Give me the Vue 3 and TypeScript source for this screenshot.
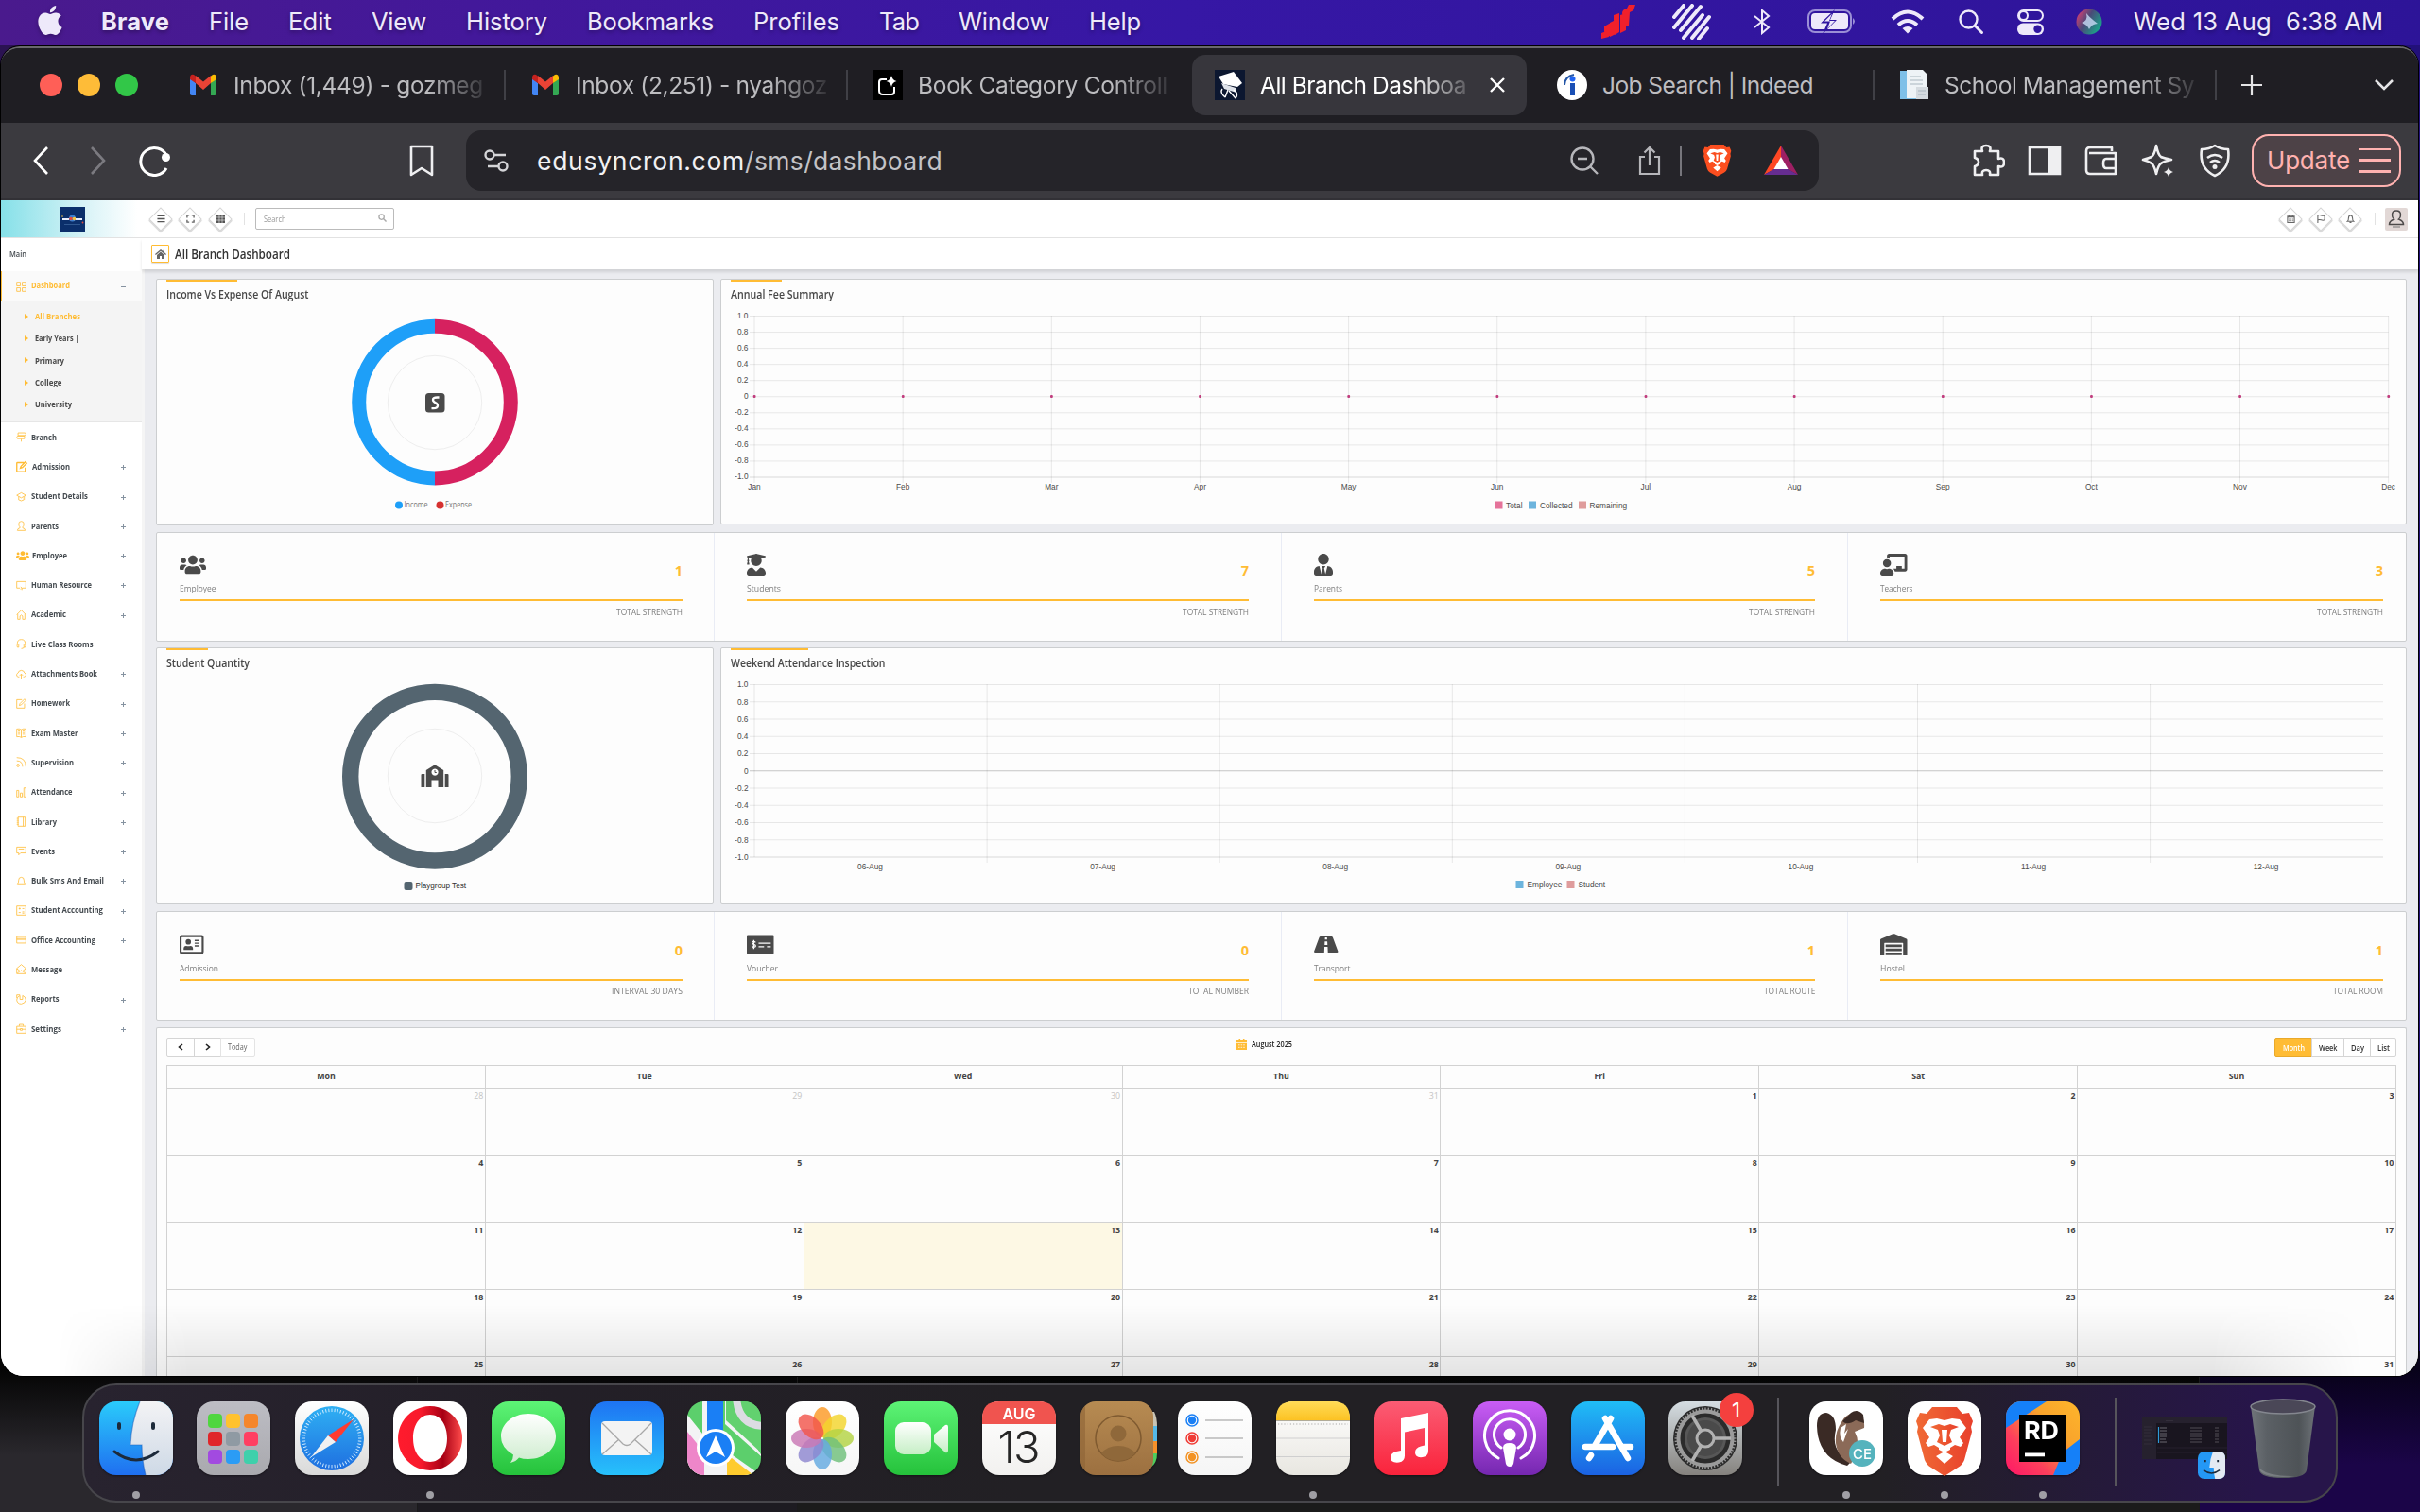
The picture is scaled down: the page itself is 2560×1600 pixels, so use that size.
<script setup lang="ts">
import type { Directive } from 'vue'

// Fits a one-line label to a given width: by letter spacing, or with the
// "squeeze" modifier by narrowing the glyphs themselves.
const vFit: Directive<HTMLElement, number> = {
  mounted(el, binding) {
    const range = document.createRange()
    range.selectNodeContents(el)
    const natural = range.getBoundingClientRect().width
    const count = (el.textContent ?? '').trim().length
    if (!count || !binding.value) return
    if (binding.modifiers.squeeze) {
      el.style.transformOrigin = '0 50%'
      el.style.transform = `scaleX(${binding.value / natural})`
    } else {
      el.style.letterSpacing = `${(binding.value - natural) / count}px`
    }
    el.style.width = `${binding.value}px`
  },
}

interface Label { text: string; w: number }

const menus: Label[] = [
  { text: 'Brave', w: 72 }, { text: 'File', w: 42 }, { text: 'Edit', w: 46 }, { text: 'View', w: 58 },
  { text: 'History', w: 86 }, { text: 'Bookmarks', w: 134 }, { text: 'Profiles', w: 91 },
  { text: 'Tab', w: 42 }, { text: 'Window', w: 96 }, { text: 'Help', w: 55 },
]

const gmail = '<path fill="#4285f4" d="M2 27V9l6 5v13H4q-2 0-2-2z"/><path fill="#34a853" d="M24 27V14l6-5v16q0 2-2 2z"/><path fill="#ea4335" d="M8 14V6l8 6.500 8-6.500v8l-8 7z"/><path fill="#c5221f" d="M2 9q0-5 4-4l2 1.500V14L2 10z"/><path fill="#fbbc04" d="M30 9q0-5-4-4l-2 1.500V14l6-4z"/>'

const tabs = [
  { text: 'Inbox (1,449) - gozmeg', w: 264, active: false, sep: true, icon: gmail },
  { text: 'Inbox (2,251) - nyahgoz', w: 266, active: false, sep: true, icon: gmail },
  { text: 'Book Category Controll', w: 264, active: false, sep: false, icon: '<rect width="32" height="32" fill="#000"/><path fill="none" stroke="#fff" stroke-width="2" d="M15 10H10q-3 0-3 3v9q0 4 4 4h9q3 0 3-3v-5"/><path fill="#fff" d="M20 6q1 5 5.500 6Q21 13 20 18q-1-5-5.500-6Q19 11 20 6z"/>' },
  { text: 'All Branch Dashboa', w: 218, active: true, sep: false, icon: '<rect width="32" height="32" fill="#0c1730"/><path fill="#fff" d="M4 7l16-5 9 12-5 4-15-3z"/><path fill="#dfe3ea" d="M7 14l15 5 1 5-13-4z"/><path stroke="#fff" stroke-width="1.400" fill="none" d="M11 29l3-8M8 20q-3 4 3 9M15 22l7 8M20 21q6 4 2 9"/>' },
  { text: 'Job Search | Indeed', w: 223, active: false, sep: true, icon: '<circle cx="16" cy="16" r="16" fill="#fff"/><circle cx="16.500" cy="9.500" r="3" fill="#2164f3"/><path d="M14 14h5v13h-5z" fill="#1a4fb5"/><path fill="none" stroke="#2557a7" stroke-width="2" d="M8 16q0-9 10-11"/>' },
  { text: 'School Management Sy', w: 264, active: false, sep: true, icon: '<path fill="#7fc0e8" d="M1 1h17v30H1z"/><path fill="#eef3f6" d="M8 0h17l5 5v25H8z"/><path fill="#d5dbe0" d="M18 18h13v13H18z"/><path stroke="#a9b6bf" d="M11 7h12M11 11h14M11 15h14M20 22h8M20 26h8"/>' },
]

const stroke = (d: string) => `<path fill="none" stroke="currentColor" d="${d}"/>`
const USERS = 'M96 224c35.300 0 64-28.700 64-64s-28.700-64-64-64-64 28.700-64 64 28.700 64 64 64zm448 0c35.300 0 64-28.700 64-64s-28.700-64-64-64-64 28.700-64 64 28.700 64 64 64zm32 32h-64c-17.600 0-33.500 7.100-45.100 18.600 40.300 22.100 68.900 62 75.100 109.400h66c17.700 0 32-14.300 32-32v-32c0-35.300-28.700-64-64-64zm-256 0c61.900 0 112-50.100 112-112S381.900 32 320 32 208 82.100 208 144s50.100 112 112 112zm76.800 32h-8.300c-20.800 10-43.900 16-68.500 16s-47.600-6-68.500-16h-8.300C179.600 288 128 339.600 128 403.200V432c0 26.500 21.500 48 48 48h288c26.500 0 48-21.500 48-48v-28.800c0-63.600-51.600-115.200-115.200-115.200zm-223.700-13.400C161.500 263.100 145.600 256 128 256H64c-35.300 0-64 28.700-64 64v32c0 17.700 14.300 32 32 32h65.900c6.300-47.400 34.900-87.300 75.200-109.400z'

interface Nav { text: string; w: number; plus: boolean; icon: string }
const nav: Nav[] = [
  { text: 'Branch', w: 27, plus: false, icon: stroke('M3 1.500h11l1 2-1 2H3zM13 6.500H2l-1 2 1 2h11zM8 11v4') },
  { text: 'Admission', w: 40, plus: true, icon: `<g stroke-width="1.800">${stroke('M11 2H2q-1 0-1 1v11q0 1 1 1h10q1 0 1-1V9M6 10l1-3 6-6 2 2-6 6z')}</g>` },
  { text: 'Student Details', w: 60, plus: true, icon: stroke('M1 6l7-4 7 4-7 4zM4 8v5q4 3 8 0V8M15 6v7') },
  { text: 'Parents', w: 29, plus: true, icon: stroke('M8 1q4 0 4 4 0 3-2 5v1q4 1 4 4H2q0-3 4-4v-1Q4 8 4 5q0-4 4-4z') },
  { text: 'Employee', w: 37, plus: true, icon: `<g transform="scale(.029) translate(0 20)"><path fill="currentColor" stroke="none" d="${USERS}"/></g>` },
  { text: 'Human Resource', w: 64, plus: true, icon: stroke('M6 12H1V2h14v10H9.500M7 10l2 2-2 2M9 12v3') },
  { text: 'Academic', w: 37, plus: true, icon: stroke('M1 8l7-7 7 7M2.500 7v8H6v-5q2-3 4 0v5h3.500V7') },
  { text: 'Live Class Rooms', w: 65.500, plus: false, icon: stroke('M2 9V7q0-6 6-6t6 6v2M2 8h2v5H2q-1-2 0-5zM14 8h-2v5h2q1-2 0-5zM12 13q0 2-4 2') },
  { text: 'Attachments Book', w: 70, plus: true, icon: stroke('M5 12H3q-3-1-2-4 1-2 2-2 1-4 5-4t5 4q3 1 2 4-1 2-3 2h-1M8 15V8M5.500 10L8 7.500 10.500 10') },
  { text: 'Homework', w: 41, plus: true, icon: stroke('M9 2H1v13h12V8M5 11l1-3 7-7 2 2-7 7z') },
  { text: 'Exam Master', w: 49.500, plus: true, icon: stroke('M8 3v12M8 3Q5 1 1 2v12q4-1 7 1 3-2 7-1V2q-4-1-7 1M3 5h3M3 7.500h3M3 10h3M10 5h3M10 7.500h3M10 10h3') },
  { text: 'Supervision', w: 45, plus: true, icon: stroke('M1 1q14 0 14 14M1 6q9 0 9 9M5 13a2 2 0 1 1-4 0 2 2 0 1 1 4 0z') },
  { text: 'Attendance', w: 43.500, plus: true, icon: stroke('M1 5h3v10H1zM6.500 9h3v6h-3zM12 1h3v14h-3z') },
  { text: 'Library', w: 27, plus: true, icon: stroke('M3 1h11v14H3zM11 1v14M1 3h3M1 6h3M1 9h3M1 12h3') },
  { text: 'Events', w: 25, plus: true, icon: stroke('M1 2h14v9H7l-3 3v-3H1zM4 5h8M4 8h6') },
  { text: 'Bulk Sms And Email', w: 77, plus: true, icon: stroke('M2 12q2-1 2-6 0-4 4-4t4 4q0 5 2 6zM6.500 13q1.500 3 3 0') },
  { text: 'Student Accounting', w: 76, plus: true, icon: stroke('M1 1h14v14H1zM4 5h3M5.500 3.500v3M9.500 5h3M4 11h3M9.500 10h3M9.500 12h3') },
  { text: 'Office Accounting', w: 68, plus: true, icon: stroke('M1 3h14v10H1zM1 6h14M1 7.500h14') },
  { text: 'Message', w: 33, plus: false, icon: stroke('M1 7l7-6 7 6v8H1zM1 7l5 4M15 7l-5 4M2 14l6-4 6 4') },
  { text: 'Reports', w: 29.500, plus: true, icon: stroke('M6 2q-5 2-5 7 1 6 7 6 6-1 7-6 0-5-5-7v6H6zM1 6V1h5') },
  { text: 'Settings', w: 32, plus: true, icon: stroke('M1 4.500h14V15H1zM5 4V1.500h6V4M1 9h5M10 9h5M6.500 8h3v2.500h-3z') },
]
const branches: Label[] = [
  { text: 'All Branches', w: 48 }, { text: 'Early Years |', w: 46.500 }, { text: 'Primary', w: 31 },
  { text: 'College', w: 28.500 }, { text: 'University', w: 39 },
]

interface Stat { label: string; w: number; value: number; sub: string; sw: number; box: string; iw: number; icon: string }
const people: Stat[] = [
  { label: 'Employee', w: 38.500, value: 1, sub: 'TOTAL STRENGTH', sw: 70, box: '0 0 640 512', iw: 28, icon: `<path d="${USERS}"/>` },
  { label: 'Students', w: 36, value: 7, sub: 'TOTAL STRENGTH', sw: 70, box: '0 0 448 512', iw: 20, icon: '<path d="M319.400 320.600L224 416l-95.400-95.400C57.100 323.700 0 382.200 0 454.400v9.600c0 26.500 21.500 48 48 48h352c26.500 0 48-21.500 48-48v-9.600c0-72.200-57.100-130.700-128.600-133.800zM13.600 79.800l6.400 1.500v58.400c-7 4.200-12 11.500-12 20.300 0 8.400 4.600 15.400 11.100 19.700L3.500 242c-1.700 6.900 2.100 14 7.600 14h41.800c5.500 0 9.300-7.100 7.600-14l-15.600-62.300C51.400 175.400 56 168.400 56 160c0-8.800-5-16.100-12-20.300V87.100l66 15.900c-8.600 17.200-14 36.400-14 57 0 70.700 57.300 128 128 128s128-57.300 128-128c0-20.600-5.300-39.800-14-57l96.300-23.200c18.200-4.400 18.200-27.100 0-31.500l-190.400-46c-13-3.100-26.700-3.100-39.700 0L13.600 48.200c-18.100 4.400-18.100 27.200 0 31.600z"/>' },
  { label: 'Parents', w: 30, value: 5, sub: 'TOTAL STRENGTH', sw: 70, box: '0 0 448 512', iw: 20, icon: '<path d="M224 256c70.700 0 128-57.300 128-128S294.700 0 224 0 96 57.300 96 128s57.300 128 128 128zm95.800 32.600L272 480l-32-136 32-56h-96l32 56-32 136-47.800-191.400C56.900 292 0 350.300 0 422.400V464c0 26.500 21.500 48 48 48h352c26.500 0 48-21.500 48-48v-41.600c0-72.100-56.900-130.400-128.200-133.800z"/>' },
  { label: 'Teachers', w: 34.500, value: 3, sub: 'TOTAL STRENGTH', sw: 70, box: '0 0 640 512', iw: 28.500, icon: '<path d="M208 352c-2.390 0-4.780.35-7.060 1.090C187.980 357.300 174.350 360 160 360c-14.350 0-27.980-2.700-40.950-6.910-2.280-.74-4.660-1.090-7.050-1.090C49.940 352-.33 402.480 0 464.620.14 490.880 21.730 512 48 512h224c26.270 0 47.860-21.120 48-47.380.33-62.140-49.940-112.620-112-112.620zm-48-32c53.020 0 96-42.980 96-96s-42.980-96-96-96-96 42.980-96 96 42.980 96 96 96zM592 0H208c-26.470 0-48 22.250-48 49.590V96c23.420 0 45.100 6.780 64 17.800V64h352v288h-64v-64H384v64h-76.240c19.100 16.690 33.120 38.730 39.690 64H592c26.470 0 48-22.250 48-49.590V49.590C640 22.250 618.470 0 592 0z"/>' },
]
const facilities: Stat[] = [
  { label: 'Admission', w: 41, value: 0, sub: 'INTERVAL 30 DAYS', sw: 75, box: '0 0 576 512', iw: 25.500, icon: '<path fill-rule="evenodd" d="M50 32h476q50 0 50 50v348q0 50-50 50H50q-50 0-50-50V82q0-50 50-50zm10 48q-12 0-12 12v328q0 12 12 12h456q12 0 12-12V92q0-12-12-12z"/><circle cx="208" cy="192" r="64"/><path d="M96 384v-30q0-62 62-66 50 20 100 0 62 4 62 66v30zM360 144h112v32H360zM360 208h112v32H360zM360 272h112v32H360z"/>' },
  { label: 'Voucher', w: 33, value: 0, sub: 'TOTAL NUMBER', sw: 64, box: '0 0 640 512', iw: 28.500, icon: '<path d="M24 32h592q24 0 24 24v400q0 24-24 24H24q-24 0-24-24V56q0-24 24-24z"/><path fill="none" stroke="#fdfdfd" stroke-width="30" d="M280 224h290M280 310h130M480 310h90M208 208q-20-26-52-22-34 6-30 34 4 22 44 32 42 12 40 40-6 30-46 28-30-2-44-24M166 150v210"/>' },
  { label: 'Transport', w: 38.500, value: 1, sub: 'TOTAL ROUTE', sw: 54.500, box: '0 0 576 512', iw: 25.500, icon: '<path fill-rule="evenodd" d="M154 64h268q20 0 28 22l122 330q10 32-22 32H26q-32 0-22-32L126 86q8-22 28-22zm110 20l-3 56h54l-3-56zm-6 100l-4 82h68l-4-82zm-8 130l-6 134h88l-6-134z"/>' },
  { label: 'Hostel', w: 26, value: 1, sub: 'TOTAL ROOM', sw: 53, box: '0 0 640 512', iw: 28.500, icon: '<path fill-rule="evenodd" d="M0 512V150q0-20 18-28L300 6q20-8 40 0l282 116q18 8 18 28v362h-96V224q0-10-10-10H106q-10 0-10 10v288z"/><path d="M128 256h384v62H128zM128 350h384v62H128zM128 446h384v62H128z"/>' },
]

const months = ['Jan', 'Feb', 'Mar', 'Apr', 'May', 'Jun', 'Jul', 'Aug', 'Sep', 'Oct', 'Nov', 'Dec']
const days = ['06-Aug', '07-Aug', '08-Aug', '09-Aug', '10-Aug', '11-Aug', '12-Aug']
const scale = ['1.0', '0.8', '0.6', '0.4', '0.2', '0', '-0.2', '-0.4', '-0.6', '-0.8', '-1.0']
const weekdays = ['Mon', 'Tue', 'Wed', 'Thu', 'Fri', 'Sat', 'Sun']
const weeks = [
  [28, 29, 30, 31, 1, 2, 3], [4, 5, 6, 7, 8, 9, 10], [11, 12, 13, 14, 15, 16, 17],
  [18, 19, 20, 21, 22, 23, 24], [25, 26, 27, 28, 29, 30, 31],
]

const grad = (id: string, a: string, b: string) =>
  `<linearGradient id="${id}" x2="0" y2="1"><stop stop-color="${a}"/><stop offset="1" stop-color="${b}"/></linearGradient>`
const tile = (id: string, a: string, b: string) => `${grad(id, a, b)}<rect width="78" height="78" rx="18" fill="url(#${id})"/>`
const ring = (n: number, r1: number, r2: number, color: string, w: number) =>
  Array.from({ length: n }, (_, i) => `<path stroke="${color}" stroke-width="${w}" d="M39 ${39 - r1}V${39 - r2}" transform="rotate(${(i * 360) / n} 39 39)"/>`).join('')

const launchColors = ['#4fd63f', '#ffc22e', '#f5862b', '#e0262a', '#8f9aa3', '#ff3f62', '#a24ae0', '#2b9cf5', '#3fd0ab']
const petals = ['#fb9a26', '#f3d42c', '#b3d343', '#6fc07a', '#64a9e0', '#8d86cf', '#c977b4', '#f2554c']

const FINDER = `${grad('fnd', '#2acbfb', '#1f6ff0')}${grad('fnr', '#f3f3f5', '#ced9e6')}<clipPath id="fc"><rect width="78" height="78" rx="18"/></clipPath><g clip-path="url(#fc)"><rect width="78" height="78" fill="url(#fnd)"/><path fill="url(#fnr)" d="M43 0Q34 22 33 46h12q0 16 4 32h30V0z"/></g><path stroke="#1d2a3a" stroke-width="4" stroke-linecap="round" d="M21 24v4M57 24v4"/><path fill="none" stroke="#1d2a3a" stroke-width="3" stroke-linecap="round" d="M16 53q23 18 46 0"/><path fill="none" stroke="#1b5bb8" stroke-width="1.200" d="M43 0Q34 22 33 46h12q0 16 4 32" opacity=".5"/>`
const LION = '<path fill="url(#lio)" d="M26 6h26l6 7 7-1 4 9-2 6 1 5-8 30q-2 5-7 8l-14 9-14-9q-5-3-7-8l-8-30 1-5-2-6 4-9 7 1z"/><path fill="#fff" d="M39 20l8-2 8 1 7 9-7 10 4 6-3 4-6-2-5 3v2l-6 3-6-3v-2l-5-3-6 2-3-4 4-6-7-10 7-9 8-1z"/><path fill="url(#lio)" d="M39 26l-6-2-9 3 8 3 2 6-3 7 8 4 8-4-3-7 2-6 8-3-9-3z"/><path fill="#fff" d="M36 30h6l-1 13h-4zM30 58l9-5 9 5-9 8z"/>'

interface DockApp { icon: string; dot: boolean; badge?: string }
const dockApps: DockApp[] = [
  { dot: true, icon: FINDER },
  { dot: false, icon: tile('lp', '#bdbdc4', '#a9a9ae') + launchColors.map((c, i) => `<rect x="${12 + (i % 3) * 19}" y="${13 + Math.floor(i / 3) * 19}" width="15" height="15" rx="4" fill="${c}"/>`).join('') },
  { dot: false, icon: `${tile('sf', '#ffffff', '#d9d9d9')}${grad('sf2', '#2fb0f3', '#1f6fe0')}<circle cx="39" cy="39" r="34" fill="url(#sf2)"/>${ring(60, 31.500, 28, '#d9efff', 0.9)}<path fill="#ff3b30" d="M62 19L43 43l-8-7z"/><path fill="#f1f1f1" d="M17 59l18-23 8 7z"/>` },
  { dot: true, icon: `${tile('op', '#ffffff', '#ffffff')}<linearGradient id="opg" x2="1"><stop stop-color="#ff1b2d"/><stop offset=".35" stop-color="#f81a2c"/><stop offset=".7" stop-color="#a70014"/><stop offset="1" stop-color="#ff4b4b"/></linearGradient><path fill="url(#opg)" fill-rule="evenodd" d="M39 5a34 34 0 1 0 .1 0zM39 14c11 0 18 11 18 25s-7 25-18 25-18-11-18-25 7-25 18-25z"/>` },
  { dot: false, icon: `${tile('ms', '#5df376', '#25c23b')}${grad('ms2', '#ffffff', '#cdeccd')}<path fill="url(#ms2)" d="M39 13c17 0 29 11 29 24S56 61 39 61q-6 0-10-1.500-3 4-9 5.500 3-4 3-8.500Q10 49 10 37c0-13 12-24 29-24z"/>` },
  { dot: false, icon: `${tile('ml', '#1e74f3', '#27c1fb')}<rect x="12" y="21" width="54" height="36" rx="4" fill="#f3f3f3"/><path fill="none" stroke="#a8a8a8" stroke-width="1.300" d="M13 23l22 22q4 3 8 0l22-22M13 56l18-16M65 56L47 40"/>` },
  { dot: false, icon: `<clipPath id="mp"><rect width="78" height="78" rx="18"/></clipPath><g clip-path="url(#mp)"><rect width="78" height="78" fill="#5ccf6c"/><path fill="#f3f3f5" d="M0 14l16 20v-34h6l2 40 54 38v-20L40 24V0h5l34 58V78H0z"/><path fill="#62d16f" d="M41 0h37v54L41 20z"/><path fill="#ee86c9" d="M0 32l18 22v24H0z"/><path fill="#fecb2e" d="M42 56l28 22H42z"/><path fill="#1a7ff5" d="M21 0h17v50H21z"/><path fill="none" stroke="#dcdce2" stroke-width="8" d="M52-4q2 30 30 30"/></g><circle cx="30" cy="49" r="20" fill="#fff"/><circle cx="30" cy="49" r="17" fill="#1a7ff5"/><path fill="#fff" d="M30 36l10 23-10-6-10 6z"/>` },
  { dot: false, icon: tile('ph', '#ffffff', '#f6f6f6') + petals.map((c, i) => `<ellipse cx="39" cy="22" rx="10" ry="16" fill="${c}" opacity=".82" transform="rotate(${i * 45} 39 39)"/>`).join('') },
  { dot: false, icon: `${tile('ft', '#5df376', '#25c23b')}${grad('ft2', '#ffffff', '#c5eec5')}<rect x="12" y="22" width="38" height="34" rx="9" fill="url(#ft2)"/><path fill="url(#ft2)" d="M53 35l12-10q3-1 3 2v25q0 3-3 2L53 43z"/>` },
  { dot: false, icon: `${tile('cl', '#ffffff', '#f2f1ef')}<path fill="#f0544f" d="M0 24V18Q0 0 18 0h42q18 0 18 18v6z"/><text x="39" y="18.500" text-anchor="middle" font-size="16" font-weight="600" fill="#fff">AUG</text><text x="38" y="65" text-anchor="middle" font-size="47" font-weight="300" letter-spacing="-2" fill="#262626">13</text>` },
  { dot: false, icon: `<path fill="#c9c4b5" d="M70 11h8q3 6 3 15H70z"/><path fill="#55b9e8" d="M70 26h11v16H70z"/><path fill="#f5902a" d="M70 42h11v13H70z"/><path fill="#4fce5e" d="M70 55h11q0 10-6 14z"/>${grad('co', '#b78b52', '#9c7040')}<rect width="77" height="78" rx="16" fill="url(#co)"/><path fill="#8d6437" opacity=".6" d="M5 5v68Q0 68 0 60V16Q0 9 5 5z"/><circle cx="40" cy="39" r="24" fill="none" stroke="#7f5a30" stroke-width="1.500"/><circle cx="40" cy="34" r="8.500" fill="#8f683a"/><path fill="#8f683a" d="M22 55q6-8 18-8t18 8q-7 8-18 8t-18-8z"/>` },
  { dot: false, icon: `${tile('rm', '#ffffff', '#f5f5f5')}<g stroke="#b9b9b9" stroke-width="1.500"><path d="M29 20h40M29 39h40M29 59h40"/></g><g fill="none" stroke-width="1.500"><circle cx="15" cy="20" r="6" stroke="#1a7ff5"/><circle cx="15" cy="39" r="6" stroke="#f03b35"/><circle cx="15" cy="59" r="6" stroke="#f39324"/></g><circle cx="15" cy="20" r="4.200" fill="#1a7ff5"/><circle cx="15" cy="39" r="4.200" fill="#f03b35"/><circle cx="15" cy="59" r="4.200" fill="#f39324"/>` },
  { dot: true, icon: `${tile('nt', '#ffffff', '#e8e6e0')}${grad('nt2', '#ffdc58', '#fcc223')}<path fill="url(#nt2)" d="M0 20V18Q0 0 18 0h42q18 0 18 18v2z"/><path stroke="#b1ab98" d="M0 20.500h78"/><path stroke="#a9a9a9" stroke-width="1.200" stroke-dasharray="1.200 2" d="M2 24h74"/><path stroke="#cfcfcf" stroke-width="1.200" d="M0 39h78M0 58.500h78"/>` },
  { dot: false, icon: `${tile('mu', '#fb5c74', '#fa233b')}<path fill="#fff" d="M28 18l29-6v40q0 6-6 7-8 1-8-5 0-5 6-6.500l4-1V28l-21 4.500v25q0 6-6 7-9 1-9-5 0-5 6-6.500l5-1z"/>` },
  { dot: false, icon: `${tile('pd', '#c95df5', '#7527b0')}<g fill="none" stroke="#fff" stroke-width="3" stroke-linecap="round"><path d="M27 60a26.500 26.500 0 1 1 24 0"/><path d="M30 49a16.500 16.500 0 1 1 18 0"/></g><circle cx="39" cy="35" r="6.500" fill="#fff"/><path fill="#fff" d="M39 44q7 0 7 5l-3 17q-1 3-4 3t-4-3l-3-17q0-5 7-5z"/>` },
  { dot: false, icon: `${tile('as', '#20bdf6', '#1b62e3')}<g stroke="#fff" stroke-width="6.500" stroke-linecap="round"><path d="M42 18L25 47M36 18l24 42M15 48h29M55 48h8M19 60l2-3"/></g>` },
  { dot: false, badge: '1', icon: `${tile('st', '#d5dde2', '#85827e')}<circle cx="39" cy="39" r="34" fill="#2b2b2b"/>${ring(60, 32.500, 29, '#9a9a9a', 1.3)}<circle cx="39" cy="39" r="28.500" fill="none" stroke="#9b9b9b" stroke-width="4"/><circle cx="39" cy="39" r="22" fill="#575757"/><circle cx="39" cy="39" r="19" fill="#4a4a4a"/><g stroke="#b2b2b2" stroke-width="3.500"><path d="M39 39h27M39 39L25 15M39 39L25 63"/></g><circle cx="39" cy="39" r="9" fill="#474747" stroke="#b2b2b2" stroke-width="3"/>` },
]
const openApps: DockApp[] = [
  { dot: true, icon: `${tile('db', '#ffffff', '#ffffff')}<path fill="#3a2a25" d="M18 12q-10 0-10 14 1 34 32 42l6-6Q22 56 28 30 28 14 18 12z"/><path fill="#8b6a58" d="M34 22q6-12 18-9 7 3 6 15l-10 4q8 14-4 34-14-6-16-22-1-12 6-22z"/><path fill="#3a2a25" d="M44 12q7-5 13 2l1 9-9-3q-9 6-14 1z"/><path fill="#fff" d="M33 28l6-4-2 10 4-5-5 14q-5-5-3-15z"/><circle cx="56" cy="55" r="14" fill="#55b3bd"/><text x="56" y="60.500" text-anchor="middle" font-size="15" font-weight="500" fill="#fff">CE</text>` },
  { dot: true, icon: `${tile('bv', '#ffffff', '#ffffff')}<linearGradient id="lio" x2="1"><stop stop-color="#f06a35"/><stop offset="1" stop-color="#e8402c"/></linearGradient>${LION}` },
  { dot: true, icon: `<clipPath id="rdc"><rect width="78" height="78" rx="16"/></clipPath><linearGradient id="rdg" x1="1" y1="0" x2="0" y2="1"><stop stop-color="#fdb62b"/><stop offset=".35" stop-color="#f9a32c"/><stop offset=".7" stop-color="#fc3f5c"/><stop offset="1" stop-color="#ff1667"/></linearGradient><g clip-path="url(#rdc)"><rect width="78" height="78" fill="url(#rdg)"/><path fill="#1580f8" d="M0 28V0h43zM50 78l10-24 18-14v38z"/></g><path d="M14 14h50v50H14z"/><text x="19" y="40" font-size="26" font-weight="700" fill="#fff" textLength="37" lengthAdjust="spacingAndGlyphs">RD</text><path fill="#fff" d="M20 54.500h21v3.800H20z"/>` },
]
</script>

<template>
  <div class="desktop">
    <header class="menubar">
      <svg class="apple" viewBox="0 0 24 24"><path d="M12.152 6.896c-.948 0-2.415-1.078-3.960-1.040-2.040.027-3.910 1.183-4.961 3.014-2.117 3.675-.546 9.103 1.519 12.090 1.013 1.454 2.208 3.090 3.792 3.039 1.520-.065 2.090-.987 3.935-.987 1.831 0 2.350.987 3.960.948 1.637-.026 2.676-1.480 3.676-2.948 1.156-1.688 1.636-3.325 1.662-3.415-.039-.013-3.182-1.221-3.220-4.857-.026-3.040 2.480-4.494 2.597-4.559-1.429-2.090-3.623-2.324-4.390-2.376-2-.156-3.675 1.090-4.610 1.090zM15.530 3.830c.843-1.012 1.400-2.427 1.245-3.830-1.207.052-2.662.805-3.532 1.818-.780.896-1.454 2.338-1.273 3.714 1.338.104 2.715-.688 3.559-1.701" /></svg>
      <span v-for="(m, i) in menus" :key="m.text" v-fit="m.w" class="menu" :class="{ app: i === 0 }">{{ m.text }}</span>
      <div class="status">
        <svg style="width: 36px" viewBox="0 0 36 36"><path fill="#f1202b" d="M0 36v-6l8-3v7zM3 28v-5l7-4v14l-6 1zM9 34V19l6-3v15zM13 16v-5l6-2v20l-5 3zM20 30V11l6-2v18zM22 9q0-4 5-5l2-4h7l-2 6-4 2-1 14-5 2z" /></svg>
        <svg style="width: 42px; margin-left: 38px" viewBox="0 0 42 38"><path stroke="#eee9fa" stroke-width="4" stroke-linecap="round" d="M3 14L13 2M3 25L22 2M10 28L31 3M13 36L33 12M22 36L40 14M29 37l9-11" /></svg>
        <svg style="width: 20px; margin-left: 44px" viewBox="0 0 20 28"><path fill="none" stroke="#eee9fa" stroke-width="2" d="M2 8l15 12-7 6V2l7 6L2 20" /></svg>
        <svg style="width: 52px; margin-left: 38px" viewBox="0 0 52 26"><rect x="1" y="1" width="45" height="23" rx="7" fill="none" stroke="#9b8fd6" stroke-width="2" /><rect x="4" y="4" width="39" height="17" rx="4" fill="#eee9fa" /><path fill="#9b8fd6" d="M48 9q4 3.500 0 7z" /><path fill="#3015a0" d="M29 0L14 14.500h7L16 26l15-15h-7z" /><path fill="#eee9fa" d="M26 4.500l-8 8h6l-3 8 8-8.500h-6z" /></svg>
        <svg style="width: 36px; margin-left: 36px" viewBox="0 0 36 26"><g fill="none" stroke="#eee9fa" stroke-width="4"><path d="M2 10q16-15 32 0M8 16.500q10-9 20 0" /></g><path fill="#eee9fa" d="M12.500 20q5.500-4 11 0L18 25.500z" /></svg>
        <svg style="width: 28px; margin-left: 35px" viewBox="0 0 28 28"><circle cx="11.500" cy="11.500" r="9" fill="none" stroke="#eee9fa" stroke-width="2.400" /><path stroke="#eee9fa" stroke-width="3" stroke-linecap="round" d="M18.500 18.500l7 7" /></svg>
        <svg style="width: 28px; margin-left: 35px" viewBox="0 0 28 27"><rect x="1" y="1" width="26" height="11" rx="5.500" fill="none" stroke="#eee9fa" stroke-width="2" /><circle cx="6.500" cy="6.500" r="4.500" fill="none" stroke="#eee9fa" stroke-width="2" /><rect y="14.500" width="28" height="12.500" rx="6" fill="#eee9fa" /><circle cx="21.500" cy="20.700" r="4.200" fill="#3015a0" /></svg>
        <svg style="width: 28px; margin-left: 34px" viewBox="0 0 28 28"><linearGradient id="sr" x2="1" y2=".6"><stop offset=".1" stop-color="#d03f74" /><stop offset=".5" stop-color="#4a4a78" /><stop offset=".95" stop-color="#1f9a88" /></linearGradient><circle cx="14" cy="14" r="13.500" fill="url(#sr)" /><path fill="#c9dcf5" opacity=".8" d="M11 5q4 5 12 11-6 0-9 6-2-5-8-7 7-2 5-10z" /></svg>
        <span v-fit="146" class="menu date">Wed 13 Aug</span>
        <span v-fit="103" class="menu time">6:38 AM</span>
      </div>
    </header>

    <div class="window">
      <div class="tabstrip">
        <div class="lights"><i class="red"></i><i class="yellow"></i><i class="green"></i></div>
        <div v-for="(t, i) in tabs" :key="i" class="tab" :class="{ active: t.active, sep: t.sep }">
          <svg class="favicon" viewBox="0 0 32 32" v-html="t.icon"></svg>
          <div class="tabtext" :class="{ whole: t.text.startsWith('Job') }"><span v-fit="t.w">{{ t.text }}</span></div>
          <svg v-if="t.active" class="close" viewBox="0 0 16 16"><path stroke="#fff" stroke-width="2.400" d="M1 1l14 14M15 1L1 15" /></svg>
        </div>
        <svg class="newtab" viewBox="0 0 22 22"><path stroke="#e4e4e6" stroke-width="2.200" d="M11 0v22M0 11h22" /></svg>
        <svg class="tabmenu" viewBox="0 0 22 14"><path fill="none" stroke="#e4e4e6" stroke-width="2.600" d="M2 2l9 9 9-9" /></svg>
      </div>

      <div class="toolbar">
        <svg style="width: 18px; height: 32px; margin-left: 33px" viewBox="0 0 18 32"><path fill="none" stroke="#fff" stroke-width="2.600" d="M16 2L3 16l13 14" /></svg>
        <svg style="width: 18px; height: 32px; margin-left: 43px" viewBox="0 0 18 32"><path fill="none" stroke="#7b7a80" stroke-width="2.600" d="M2 2l13 14L2 30" /></svg>
        <svg style="width: 34px; height: 34px; margin-left: 33px" viewBox="0 0 34 34"><path fill="none" stroke="#fff" stroke-width="3" d="M30 25A14.500 14.500 0 1 1 30.500 12" /><circle cx="29.500" cy="13.500" r="4.500" fill="#fff" /></svg>
        <svg style="width: 26px; height: 34px; margin-left: 253px" viewBox="0 0 26 34"><path fill="none" stroke="#efeff1" stroke-width="2.600" stroke-linejoin="round" d="M2 2h22v30l-11-7-11 7z" /></svg>
        <div class="urlbar">
          <svg style="width: 27px; height: 24px; margin-left: 19px" viewBox="0 0 27 24"><g fill="none" stroke="#d5d5d8" stroke-width="2.400"><circle cx="6" cy="6" r="4.500" /><path d="M11 6h12M4 18h11" /><circle cx="20" cy="18" r="4.500" /></g></svg>
          <span v-fit="220" class="host">edusyncron.com</span><span v-fit="209" class="path">/sms/dashboard</span>
          <svg style="width: 30px; height: 30px; margin-left: auto" viewBox="0 0 30 30"><g fill="none" stroke="#b6b6ba" stroke-width="2.400"><circle cx="13" cy="13" r="11.500" /><path d="M8 13h10M21.500 21.500L29 29" /></g></svg>
          <svg style="width: 24px; height: 32px; margin-left: 42px" viewBox="0 0 24 32"><path fill="none" stroke="#b6b6ba" stroke-width="2.200" d="M7 12H2v18h20V12h-5M12 21V2M6.500 7.500L12 2l5.500 5.500" /></svg>
          <i class="bar"></i>
          <svg style="width: 33px; height: 37px; margin-left: 21px" viewBox="0 0 78 82"><path fill="#fb4e1f" d="M22 2h34l6 7 8-1 4 10-2 7 1 6-9 32q-2 6-7 9l-18 10-18-10q-5-3-7-9L5 31l1-6-2-7 4-10 8 1z" /><path fill="#fff" d="M39 15l9-2 9 1 8 10-8 12 4 6-3 5-7-3-6 4v3l-6 3-6-3v-3l-6-4-7 3-3-5 4-6-8-12 8-10 9-1z" /><path fill="#fb4e1f" d="M39 23l-7-2-10 3 9 4 2 6-3 8 9 5 9-5-3-8 2-6 9-4-10-3z" /><path fill="#fff" d="M36 27h6l-1 15h-4zM29 60l10-6 10 6-10 9z" /></svg>
          <svg style="width: 36px; height: 31px; margin: 0 22px 0 33px" viewBox="0 0 36 31"><path fill="#ff4724" d="M18 0v13l-7 12L0 31z" /><path fill="#9e1f63" d="M18 0l18 31-11-6-7-12z" /><path fill="#662d91" d="M0 31l10.500-6h15L36 31z" /><path fill="#fff" d="M18 12l7.500 13h-15z" /></svg>
        </div>
        <svg style="width: 36px; height: 36px; margin-left: 161px" viewBox="0 0 36 36"><path fill="none" stroke="#efeff1" stroke-width="2.600" stroke-linejoin="round" d="M4 8h8q-2-6 4-6t4 6h9v8q6-2 6 4t-6 4v9H20q1-5-4-5t-4 5H4v-9q4-1 4-4.500T4 15z" /></svg>
        <svg style="width: 36px; height: 32px; margin-left: 24px" viewBox="0 0 36 32"><path fill="none" stroke="#efeff1" stroke-width="2.600" d="M2 2h32v28H2z" /><path fill="#efeff1" d="M22 2h12v28H22z" /></svg>
        <svg style="width: 36px; height: 32px; margin-left: 24px" viewBox="0 0 36 32"><g fill="none" stroke="#efeff1" stroke-width="2.600" stroke-linejoin="round"><path d="M29 6V2H6Q2 2 2 6v20q0 4 4 4h27V8H5" /><path d="M33 14H23q-3 0-3 5t3 5h10" /></g></svg>
        <svg style="width: 36px; height: 36px; margin-left: 24px" viewBox="0 0 36 36"><path fill="none" stroke="#efeff1" stroke-width="2.600" stroke-linejoin="round" d="M16 2q2 10 5 12 2 1 11 3-9 2-11 4-3 2-5 11-2-9-5-11-2-2-9-4 7-2 9-3 3-2 5-12z" /><path fill="#efeff1" d="M29 25q1 4 5 5-4 1-5 5-1-4-5-5 4-1 5-5z" /></svg>
        <svg style="width: 34px; height: 36px; margin-left: 25px" viewBox="0 0 34 36"><g fill="none" stroke="#efeff1" stroke-width="2.600" stroke-linejoin="round"><path d="M17 2q6 4 14 4 3 20-14 28Q0 26 3 6q8 0 14-4z" /><path d="M9 15q8-6 16 0M12 20q5-4 10 0" /></g><circle cx="17" cy="24.500" r="2.500" fill="#efeff1" /></svg>
        <div class="update"><span v-fit="88">Update</span><i></i></div>
      </div>

      <div class="page">
        <header class="topbar">
          <div class="brand"><svg viewBox="0 0 27 26"><path fill="#0b2f6b" d="M0 0h27v26H0z" /><circle cx="13.500" cy="12" r="3.500" fill="#3c7fd0" /><circle cx="12" cy="12.500" r="1.800" fill="#e34b3d" /><circle cx="15.500" cy="12.500" r="1.800" fill="#f5c542" /><path stroke="#e8eefc" stroke-width="2.200" d="M3 13h7M17 13h7" /><path stroke="#3f689f" stroke-width=".7" d="M5 18.500h17" /><circle cx="3" cy="10" r=".8" fill="#f5c542" /><circle cx="24.500" cy="16.500" r=".9" fill="#e34b3d" /></svg></div>
          <div class="gem" style="margin-left: 10px"><i></i><svg viewBox="0 0 10 10"><path stroke="#555" stroke-width="1.500" d="M.5 1.500h9M.5 5h9M.5 8.500h9" /></svg></div>
          <div class="gem" style="margin-left: 11px"><i></i><svg viewBox="0 0 10 10"><path fill="none" stroke="#666" stroke-width="1.500" d="M1 4V1h2.500M6.500 1H9v3M9 6.500V9H6.500M3.500 9H1V6.500" /></svg></div>
          <div class="gem" style="margin-left: 12px"><i></i><svg viewBox="0 0 10 10"><path fill="#555" d="M0 0h10v10H0z" /><path stroke="#fff" stroke-width=".6" d="M3.300 0v10M6.700 0v10M0 3.300h10M0 6.700h10" /></svg></div>
          <i class="tick" style="margin-left: 15px"></i>
          <div class="search"><span v-fit.squeeze="23.500">Search</span><svg viewBox="0 0 10 10"><circle cx="4" cy="4" r="3" fill="none" stroke="#aaa" stroke-width="1.400" /><path stroke="#aaa" stroke-width="1.600" d="M6.500 6.500L9.500 9.500" /></svg></div>
          <div class="gem" style="margin-left: auto"><i></i><svg viewBox="0 0 10 10"><path fill="none" stroke="#666" stroke-width="1.200" d="M1 2h8v7.500H1zM3 0v2.500M7 0v2.500M1 3h8" /><path stroke="#666" stroke-width="1.200" stroke-dasharray="1.200 1" d="M2.500 5.500h5.500M2.500 7.500h5.500" /></svg></div>
          <div class="gem" style="margin-left: 12px"><i></i><svg viewBox="0 0 10 10"><path fill="none" stroke="#666" stroke-width="1.200" d="M1 10V1q2-.8 4 0t4 0v5.500q-2 .8-4 0t-4 0" /></svg></div>
          <div class="gem" style="margin-left: 11px"><i></i><svg viewBox="0 0 10 10"><path fill="none" stroke="#666" stroke-width="1.200" d="M1.500 8q1.200-1 1.200-4Q3 1 5 1t2.300 3q0 3 1.200 4zM4 9q1 1.200 2 0" /></svg></div>
          <i class="tick" style="margin-left: 16px"></i>
          <svg class="avatar" viewBox="0 0 24 24"><rect width="24" height="24" rx="2" fill="#e2d8d6" /><path fill="none" stroke="#4d4a4a" stroke-width="1.500" d="M12 3q4.500 0 4.500 4.500 0 3-2 4.500 5 2 5 5.500h-15q0-3.500 5-5.500-2-1.500-2-4.500Q7.500 3 12 3z" /><path stroke="#777" d="M8 20h8" /></svg>
        </header>

        <div class="body">
          <nav class="sidebar">
            <div class="section"><span v-fit.squeeze="18">Main</span></div>
            <div class="item current">
              <svg viewBox="0 0 16 16"><path fill="none" stroke="currentColor" d="M1 1h5.500v5.500H1zM9.500 1H15v5.500H9.500zM1 9.500h5.500V15H1zM9.500 9.500H15V15H9.500z" /></svg>
              <span v-fit.squeeze="41">Dashboard</span><b class="toggle minus"></b>
            </div>
            <div class="sub">
              <div v-for="(b, i) in branches" :key="b.text" class="leaf" :class="{ on: i === 0 }"><i></i><span v-fit.squeeze="b.w">{{ b.text }}</span></div>
            </div>
            <div v-for="n in nav" :key="n.text" class="item" :class="{ solid: n.text === 'Employee' || n.text === 'Admission' }">
              <svg viewBox="0 0 16 16" v-html="n.icon"></svg>
              <span v-fit.squeeze="n.w">{{ n.text }}</span><b v-if="n.plus" class="toggle"></b>
            </div>
          </nav>
          <div class="rail"></div>
          <main class="content">
            <div class="pagehead">
              <div class="home"><svg viewBox="0 0 12 10"><path fill="#666" d="M6 0L0 5l.8 1L6 1.700 11.200 6l.8-1-2-1.700V.8H8.600v1.300zM6 2.600L2 6v4h3V7h2v3h3V6z" /></svg></div>
              <span v-fit.squeeze="122">All Branch Dashboard</span>
            </div>

            <div class="row first">
              <section class="card pie">
                <i class="accent" style="width: 75px"></i>
                <h3><span v-fit.squeeze="150.500">Income Vs Expense Of August</span></h3>
                <svg class="plot" viewBox="166 326 588 229">
                  <path fill="none" stroke="#d6215f" stroke-width="15" d="M460 345.300a80.300 80.300 0 0 1 0 160.600" />
                  <path fill="none" stroke="#1e9ff8" stroke-width="15" d="M460 345.300a80.300 80.300 0 0 0 0 160.600" />
                  <circle cx="460" cy="426" r="49.700" fill="none" stroke="#eee" />
                  <rect x="450" y="416" width="20.500" height="20.500" rx="3.500" fill="#4a4a4a" />
                  <path fill="none" stroke="#fff" stroke-width="2.300" d="M464.500 420.500h-2q-4.500 0-4.500 2.600 0 1.900 2.500 3t2.500 3.200q0 2.900-4.500 2.900h-2" />
                  <circle cx="422" cy="534.500" r="4" fill="#1e9ff8" /><circle cx="465.500" cy="534.500" r="4" fill="#d63230" />
                  <g class="sig"><text x="427.500" y="537.300" textLength="25" lengthAdjust="spacingAndGlyphs">Income</text><text x="471" y="537.300" textLength="28" lengthAdjust="spacingAndGlyphs">Expense</text></g>
                </svg>
              </section>
              <section class="card wide">
                <i class="accent" style="width: 54px"></i>
                <h3><span v-fit.squeeze="109">Annual Fee Summary</span></h3>
                <svg class="plot" viewBox="763 326 1782 228">
                  <g class="grid">
                    <path v-for="(s, i) in scale" :key="'h' + i" :d="`M793 ${334.500 + i * 17.05}H2526.700`" :class="{ zero: i === 10 }" />
                    <path v-for="(m, i) in months" :key="'v' + m" :d="`M${798 + i * 157.15} 334V511`" />
                  </g>
                  <g class="tick-text">
                    <text v-for="(s, i) in scale" :key="s" x="791.500" :y="337.300 + i * 17" text-anchor="end">{{ s }}</text>
                    <text v-for="(m, i) in months" :key="m" :x="798 + i * 157.15" y="518.300" text-anchor="middle">{{ m }}</text>
                  </g>
                  <rect v-for="(m, i) in months" :key="'d' + m" :x="796.700 + i * 157.15" y="418" width="2.800" height="3" rx="1" fill="#c13d7e" />
                  <rect x="1581.500" y="530.500" width="8" height="8" fill="#e5739a" /><rect x="1617" y="530.500" width="8" height="8" fill="#6cb4dd" /><rect x="1670" y="530.500" width="8" height="8" fill="#df9c9c" />
                  <g class="tick-text"><text x="1593" y="537.500">Total</text><text x="1629" y="537.500">Collected</text><text x="1681.500" y="537.500">Remaining</text></g>
                </svg>
              </section>
            </div>

            <div class="card stats people">
              <div v-for="s in people" :key="s.label" class="stat">
                <div class="statmain">
                  <svg :viewBox="s.box" :style="{ width: s.iw + 'px' }" v-html="s.icon"></svg>
                  <span v-fit.squeeze="s.w" class="name">{{ s.label }}</span>
                  <b>{{ s.value }}</b>
                </div>
                <div class="statsub"><span v-fit.squeeze="s.sw">{{ s.sub }}</span></div>
              </div>
            </div>

            <div class="row second">
              <section class="card pie">
                <i class="accent" style="width: 44px"></i>
                <h3><span v-fit.squeeze="88">Student Quantity</span></h3>
                <svg class="plot" viewBox="166 716 588 240">
                  <circle cx="460" cy="821.700" r="89.300" fill="none" stroke="#546570" stroke-width="17.400" />
                  <circle cx="460" cy="821" r="49.700" fill="none" stroke="#eee" />
                  <path fill="#4a4a4a" fill-rule="evenodd" d="M450.800 833v-18l9.200-5.700 9.200 5.700v18h-5.700v-7.500h-7V833zM460 813.500a3.600 3.600 0 1 0 .1 0zM445.500 833v-13q0-1 1-1h2.800v14zM474.500 833v-13q0-1-1-1h-2.800v14z" />
                  <path fill="none" stroke="#4a4a4a" d="M460 815v2.500h1.800" />
                  <rect x="427.500" y="933" width="9" height="9" rx="2" fill="#546570" />
                  <text class="play" x="439.500" y="940.300" textLength="53.500">Playgroup Test</text>
                </svg>
              </section>
              <section class="card wide">
                <i class="accent" style="width: 82px"></i>
                <h3><span v-fit.squeeze="163.500">Weekend Attendance Inspection</span></h3>
                <svg class="plot" viewBox="763 716 1782 240">
                  <g class="grid">
                    <path v-for="(s, i) in scale" :key="'h' + i" :d="`M793 ${724.500 + i * 18.25}H2521`" :class="{ zero: i === 10, mid: i === 5 }" />
                    <path v-for="(d, i) in days" :key="'v' + d" :d="`M${798 + i * 246.1} 724V${i ? 913 : 907}`" />
                  </g>
                  <g class="tick-text">
                    <text v-for="(s, i) in scale" :key="s" x="791.500" :y="727.300 + i * 18.25" text-anchor="end">{{ s }}</text>
                    <text v-for="(d, i) in days" :key="d" :x="920.500 + i * 246.1" y="920" text-anchor="middle">{{ d }}</text>
                  </g>
                  <rect x="1603.500" y="932" width="8" height="8" fill="#6cb4dd" /><rect x="1657.500" y="932" width="8" height="8" fill="#df9c9c" />
                  <g class="tick-text"><text x="1615.500" y="939.200">Employee</text><text x="1669.500" y="939.200">Student</text></g>
                </svg>
              </section>
            </div>

            <div class="card stats">
              <div v-for="s in facilities" :key="s.label" class="stat">
                <div class="statmain">
                  <svg :viewBox="s.box" :style="{ width: s.iw + 'px' }" v-html="s.icon"></svg>
                  <span v-fit.squeeze="s.w" class="name">{{ s.label }}</span>
                  <b>{{ s.value }}</b>
                </div>
                <div class="statsub"><span v-fit.squeeze="s.sw">{{ s.sub }}</span></div>
              </div>
            </div>

            <section class="card calendar">
              <div class="caltools">
                <div class="btns"><span style="width: 30px"><svg viewBox="0 0 6 8"><path d="M5 1L1.500 4 5 7" /></svg></span><span style="width: 29px"><svg viewBox="0 0 6 8"><path d="M1 1l3.500 3L1 7" /></svg></span><span class="today-btn" style="width: 37px"><em v-fit.squeeze="20.500">Today</em></span></div>
                <div class="caltitle"><svg viewBox="0 0 11 12"><path fill="#ffbc34" d="M0 1.500h2.500V0h1.600v1.500h2.800V0h1.600v1.500H11V4H0zM0 4.800h11V12H0z" /><path stroke="#fff" stroke-width=".8" d="M2 6.800h7M2 9.300h7" stroke-dasharray="1.600 1" /></svg><span v-fit.squeeze="43">August 2025</span></div>
                <div class="btns views"><span class="sel" style="width: 40px"><em v-fit.squeeze="23">Month</em></span><span style="width: 35px"><em v-fit.squeeze="19.500">Week</em></span><span style="width: 29px"><em v-fit.squeeze="14">Day</em></span><span style="width: 28px"><em v-fit.squeeze="13">List</em></span></div>
              </div>
              <div class="calgrid">
                <div v-for="w in weekdays" :key="w" class="wd">{{ w }}</div>
                <template v-for="(week, r) in weeks" :key="r">
                  <div v-for="(d, c) in week" :key="c" class="day" :class="{ out: r === 0 && d > 20, now: r === 2 && c === 2 }">{{ d }}</div>
                </template>
              </div>
            </section>
          </main>
        </div>
        <div class="shade"></div>
      </div>
    </div>

    <footer class="below">
      <i class="wall w1"></i><i class="wall w2"></i><i class="wall w3"></i><i class="wall w4"></i>
      <div class="dock">
        <div v-for="(a, i) in dockApps" :key="i" class="app-slot">
          <svg viewBox="0 0 78 78" v-html="a.icon"></svg>
          <span v-if="a.badge" class="badge">{{ a.badge }}</span>
          <i v-if="a.dot" class="dot"></i>
        </div>
        <i class="dsep" style="margin: 0 19px 0 24px"></i>
        <div v-for="(a, i) in openApps" :key="'o' + i" class="app-slot">
          <svg viewBox="0 0 78 78" v-html="a.icon"></svg><i class="dot"></i>
        </div>
        <i class="dsep" style="margin: 0 27px 0 24px"></i>
        <div class="mini">
          <svg class="thumb" viewBox="0 0 90 44"><path fill="#19151f" d="M0 0h90v44H0z" /><path fill="#26212e" d="M0 0h15v44H0zM15 0h75v6H15z" /><path stroke="#37323f" stroke-width=".8" d="M2 10h8M2 13h9M2 16h7M2 20h9M2 24h8M2 28h8M25 3.500h8" /><path stroke="#7f7d86" stroke-width=".8" stroke-dasharray="7 1" d="M19 11h7M19 14h8M19 17h7M19 20h8M19 23h6M19 26h8" /><path stroke="#5f5d66" stroke-width=".8" d="M51 11h12M51 14h12M51 17h12M51 20h12M51 23h12M51 26h12M77 11h4M77 14h4M77 17h4M77 20h4M77 23h4M77 26h4" /><path stroke="#26212e" d="M16 32h74M16 37h74" /><path stroke="#2e9ad8" stroke-width="1.200" d="M17.500 10v17" /></svg>
          <svg class="minifinder" viewBox="0 0 78 78"><rect width="78" height="78" rx="18" fill="#2498f5" /><path fill="#e4eaf2" d="M43 0Q34 22 33 46h12q0 16 4 32h11q18 0 18-18V18Q78 0 60 0z" /><path stroke="#1d2a3a" stroke-width="5" d="M21 24v6M57 24v6" /><path fill="none" stroke="#1d2a3a" stroke-width="4" d="M16 53q23 18 46 0" /></svg>
        </div>
        <svg class="trash" viewBox="0 0 70 85"><linearGradient id="tr" x2="1"><stop stop-color="#70757a" /><stop offset=".25" stop-color="#5b6065" /><stop offset=".75" stop-color="#4e5357" /><stop offset="1" stop-color="#6d7277" /></linearGradient><path fill="url(#tr)" d="M1 8l9 68q2 8 25 8t25-8l9-68z" /><ellipse cx="35" cy="8.500" rx="34" ry="7.500" fill="#4a4757" stroke="#84878f" stroke-width="1.500" /><path fill="#a0a3a6" opacity=".45" d="M10 74q2 9 25 9 8 0 13-1-26 1-38-8z" /></svg>
      </div>
    </footer>
  </div>
</template>

<style>
body { margin: 0; overflow: hidden; background: #000; }
</style>

<style scoped>
* { box-sizing: border-box; }
i, em { font-style: normal; display: block; }
svg { display: block; flex: none; }
.desktop { width: 2560px; height: 1600px; overflow: hidden; background: linear-gradient(90deg, #2b1352, #22107a); font-family: Inter, "Liberation Sans", sans-serif; display: flex; flex-direction: column; }
.menubar { height: 48px; flex: none; display: flex; align-items: center; padding: 0 39px 2px 40px; background: linear-gradient(90deg, #4a1a8d 0, #43189a 500px, #3617a5 1250px, #2d1498 2560px); color: #eee9fa; }
.apple { width: 32px; height: 31px; margin: 0 -3px 3px -3px; fill: #eee9fa; filter: drop-shadow(0 2px 2px #0004); }
.menu { flex: none; white-space: nowrap; font-size: 25.500px; line-height: 46px; margin-left: 42px; text-shadow: 0 2px 4px #0005; }
.menu.app { font-weight: 700; margin-left: 41px; }
.status { margin-left: auto; display: flex; align-items: center; }
.date { margin-left: 33px; }
.time { margin-left: 15px; }

.window { width: 2557px; height: 1407px; margin: 1px 0 0 1px; flex: none; border-radius: 20px 20px 24px 24px; overflow: hidden; border-top: 2px solid #69686d; background: #1f1e23; box-shadow: 0 0 0 1px #000; display: flex; flex-direction: column; position: relative; z-index: 1; }
.tabstrip { height: 79px; flex: none; display: flex; align-items: center; background: #1f1e23; padding-bottom: 1px; }
.lights { display: flex; gap: 16px; margin: 0 26px 0 41px; }
.lights i { width: 24px; height: 24px; border-radius: 50%; }
.red { background: #ff5f57; } .yellow { background: #febc38; } .green { background: #32c748; }
.tab { width: 362px; height: 64px; flex: none; display: flex; align-items: center; padding-left: 27px; position: relative; color: #bdbdc0; font-size: 24.500px; }
.tab.active { width: 354px; margin: 0 5px 0 3px; padding-left: 24px; background: #37363c; border-radius: 14px; color: #fff; }
.tab.sep::after { content: ""; position: absolute; right: -1px; top: 16px; width: 2px; height: 32px; background: #404046; }
.favicon { width: 32px; height: 32px; }
.tabtext { margin-left: 16px; width: 266px; overflow: hidden; white-space: nowrap; line-height: 40px; -webkit-mask-image: linear-gradient(90deg, #000 205px, #0002 266px); mask-image: linear-gradient(90deg, #000 205px, #0002 266px); }
.tabtext span { display: inline-block; white-space: nowrap; }
.tabtext.whole { -webkit-mask-image: none; mask-image: none; }
.active .tabtext { width: 220px; -webkit-mask-image: linear-gradient(90deg, #000 160px, #0003 218px); mask-image: linear-gradient(90deg, #000 160px, #0003 218px); }
.close { width: 16px; height: 16px; margin-left: 23px; }
.newtab { width: 22px; height: 22px; margin-left: 27px; }
.tabmenu { width: 22px; height: 14px; margin-left: 118px; }

.toolbar { height: 82px; flex: none; display: flex; align-items: center; background: #3b3a3f; border-bottom: 3px solid #323136; }
.urlbar { width: 1431px; height: 64px; margin-left: 34px; border-radius: 16px; background: #252429; display: flex; align-items: center; font-size: 26.500px; white-space: nowrap; }
.host { color: #f1f1f3; margin-left: 29px; flex: none; }
.path { color: #c3c3c7; flex: none; }
.bar { width: 2px; height: 32px; background: #77767c; margin-left: 20px; }
.update { width: 158px; height: 56px; margin-left: 22px; border: 2.500px solid #ffb2b0; border-radius: 18px; background: #4d4247; color: #ffb2b0; font-size: 26px; display: flex; align-items: center; padding-left: 14px; white-space: nowrap; }
.update i { width: 34px; height: 26px; margin-left: 9px; background: linear-gradient(#ffb2b0 2.500px, #0000 0 11.500px, #ffb2b0 0 14px, #0000 0 23px, #ffb2b0 0); }

.page { flex: 1; min-height: 0; background: #fff; display: flex; flex-direction: column; position: relative; overflow: hidden; font-family: "Open Sans", "Noto Sans", sans-serif; margin-left: -1px; width: 2558px; }
.topbar { height: 40px; flex: none; border-bottom: 1px solid #e2e2e2; display: flex; align-items: center; background: #fff; padding-right: 11px; }
.brand { width: 150px; height: 39px; background: linear-gradient(90deg, #85e0e8, #d8f3f7 90px, #fff 145px); padding: 7px 0 0 63px; }
.brand svg { width: 27px; height: 26px; }
.gem { width: 20px; height: 20px; position: relative; display: flex; align-items: center; justify-content: center; flex: none; }
.gem i { position: absolute; inset: 1px; border: 1px solid #d6d6d6; transform: rotate(45deg); box-shadow: 1px 1px 1px #ccc; background: #fff; }
.gem svg { width: 9px; height: 9px; position: relative; }
.tick { width: 1px; height: 13px; background: #e2e2e2; }
.search { width: 147px; height: 23px; margin-left: 11px; border: 1px solid #bbb; border-radius: 2px; display: flex; align-items: center; justify-content: space-between; padding: 0 7px 0 8px; font-size: 8.800px; color: #999; }
.search svg { width: 9px; height: 9px; margin-top: -3px; }
.avatar { width: 24px; height: 24px; margin-left: 10px; }
.body { flex: 1; min-height: 0; display: flex; }
.sidebar { width: 150px; flex: none; background: #fff; font-size: 9.200px; font-weight: 700; color: #454b50; display: flex; flex-direction: column; white-space: nowrap; }
.section { height: 35px; padding: 10px 0 0 10px; line-height: 13px; flex: none; font-weight: 600; }
.section span { display: block; }
.item { height: 31.300px; flex: none; display: flex; align-items: center; padding-left: 17px; position: relative; }
.item svg { width: 11px; height: 11px; color: #ffbc34; overflow: visible; stroke-width: 1.150; }
.item span { margin-left: 5px; margin-top: -1px; flex: none; }
.item.solid svg { width: 12px; height: 12px; }
.toggle { position: absolute; left: 128px; top: 14px; width: 5px; height: 5px; background: linear-gradient(#8592a0, #8592a0) 0 2px / 5px 1px no-repeat, linear-gradient(#8592a0, #8592a0) 2px 0 / 1px 5px no-repeat; }
.toggle.minus { left: 126px; background: linear-gradient(#8592a0, #8592a0) 0 2px / 5px 1px no-repeat; }
.item.current { height: 32px; background: #fafafa; color: #ffbc34; border-left: 2px solid #ffbc34; padding-left: 15px; }
.item.current span { margin-top: -4px; }
.sub { height: 128px; flex: none; background: #f4f4f4; border-bottom: 1px solid #e6e6e6; padding-top: 4px; }
.leaf { height: 23.300px; display: flex; align-items: center; padding-left: 26px; color: #4a4a4a; }
.leaf i { width: 0; height: 0; border: 3px solid transparent; border-left: 4px solid #ffbc34; border-right: 0; margin-right: 7px; }
.leaf.on { color: #ffbc34; }
.rail { width: 3px; background: #f5f5f5; margin-top: 33px; flex: none; }
.content { flex: 1; min-width: 0; background: #ebecf0; padding: 0 12px; display: flex; flex-direction: column; }
.pagehead { height: 33px; flex: none; margin: 0 -12px 10px -15px; padding-left: 10px; background: #fff; box-shadow: 0 3px 3px #0000001c; display: flex; align-items: center; font-size: 13.600px; font-weight: 600; color: #333; white-space: nowrap; }
.home { width: 19px; height: 19px; border: 1px solid #ffbc34; border-radius: 1px; display: flex; align-items: center; justify-content: center; margin-right: 6px; box-shadow: 0 1px 1px #0002; }
.home svg { width: 12px; height: 10px; }
.row { display: flex; gap: 7px; flex: none; align-items: flex-start; }
.card { background: #fdfdfd; border: 1px solid #ccced0; border-radius: 2px; }
.pie { width: 590px; flex: none; }
.wide { width: 1784px; flex: none; }
.first { height: 268px; }
.first .pie { height: 261px; } .first .wide { height: 260px; }
.second { height: 279px; margin-top: 6px; }
.second .card { height: 272px; }
.accent { height: 1.500px; background: #ffbc34; margin-left: 10px; }
h3 { margin: 0; height: 28.500px; padding: 4.500px 0 0 10px; font-size: 12.400px; line-height: 20px; font-weight: 600; color: #484848; }
h3 span { white-space: nowrap; display: inline-block; }
.plot { width: 100%; }
.pie .plot { width: 588px; } .wide .plot { width: 1782px; }
.grid path { stroke: #00000016; fill: none; }
.grid .zero { stroke: #00000024; }
.grid .mid { stroke: #00000038; }
.tick-text { font: 8.300px "Liberation Sans", Arial, sans-serif; fill: #4c4c4c; }
.sig { font-size: 8.200px; fill: #777; }
.play { font: 8.200px "Liberation Sans", Arial, sans-serif; fill: #333; }
.stats { height: 116px; flex: none; display: grid; grid-template-columns: 589px 600px 599px 590px; }
.stat { padding: 23px 34px 0; border-left: 1px solid #e9ecf5; }
.people .stat { padding-top: 22px; }
.people .statsub { margin-top: 5px; }
.stat:first-child { padding-left: 24px; border: 0; padding-right: 33px; }
.stat:last-child { padding-right: 23px; }
.statmain { height: 50px; border-bottom: 2px solid #ffbc34; position: relative; font-size: 9.400px; color: #808080; }
.statmain svg { height: 23px; fill: #4a4a4a; }
.statmain .name { display: block; line-height: 13px; margin-top: 6.500px; white-space: nowrap; }
.statmain b { position: absolute; right: 0; top: 8px; line-height: 20px; font-size: 14.500px; font-weight: 700; color: #ffbc34; }
.statsub { display: flex; justify-content: flex-end; font-size: 9.200px; line-height: 13px; margin-top: 4px; color: #808080; white-space: nowrap; }
.calendar { margin-top: 7px; height: 400px; flex: none; padding: 10px 10px 0; border-bottom: 0; }
.caltools { display: flex; justify-content: space-between; align-items: flex-start; height: 29px; font-size: 8.800px; position: relative; }
.btns { display: flex; height: 20px; color: #333; }
.btns > span { border: 1px solid #d5d5d5; margin-right: -1px; display: flex; align-items: center; justify-content: center; background: #fff; }
.btns > span:first-child { border-radius: 2px 0 0 2px; } .btns > span:last-child { border-radius: 0 2px 2px 0; }
.btns svg { width: 6px; height: 8px; fill: none; stroke: #222; stroke-width: 1.600; }
.btns em { white-space: nowrap; }
.btns .today-btn { color: #666; border-color: #e4e4e4; }
.views { margin-right: 1px; font-size: 8.400px; font-weight: 600; }
.views .sel { background: #ffbc34; color: #fff; border-color: #e9a92a; }
.caltitle { position: absolute; left: 1131.500px; top: 0; display: flex; align-items: center; gap: 5.500px; height: 13px; color: #222; font-size: 8.600px; font-weight: 600; white-space: nowrap; }
.caltitle svg { width: 11px; height: 12px; }
.calgrid { display: grid; grid-template-columns: repeat(7, 336.850px); grid-auto-rows: 71px; border-left: 1px solid #d2d2d2; border-top: 1px solid #d2d2d2; width: 2359px; grid-template-rows: 24px; font-size: 8.800px; font-weight: 700; color: #444; }
.wd, .day { border-right: 1px solid #d2d2d2; border-bottom: 1px solid #d2d2d2; }
.wd { text-align: center; line-height: 22px; }
.day { text-align: right; padding: 2px 1.500px 0 0; line-height: 13px; }
.day.out { color: #c4c4c4; font-weight: 400; }
.day.now { background: #fdf8e4; }
.shade { position: absolute; left: 0; right: 0; bottom: 0; height: 75px; background: linear-gradient(#0000, #0000001a); -webkit-mask-image: linear-gradient(90deg, #0000 60px, #000 200px 2340px, #0000 2500px); mask-image: linear-gradient(90deg, #0000 60px, #000 200px 2340px, #0000 2500px); }

.below { flex: 1; display: flex; position: relative; background: #1a1a1b; z-index: 0; }
.wall { position: absolute; top: -26px; bottom: 0; z-index: -1; }
.w1 { left: 0; width: 441px; background: linear-gradient(#050505 20px, #2a282d 110px); }
.w2 { left: 442px; width: 401px; background: linear-gradient(#040404 20px, #1d1b21 110px); }
.w3 { left: 844px; width: 1482px; background: linear-gradient(#030303 20px, #1b1b1b 110px); }
.w4 { left: 2327px; width: 233px; background: linear-gradient(#08021a 20px, #1b0548 120px); }
.dock { width: 2386px; height: 126px; margin: 8px 0 0 87px; border: 2px solid #47464b; border-radius: 36px; background: linear-gradient(90deg, #28232f, #231f27 500px, #222024 1000px 1900px, #27154a 2300px); display: flex; padding: 17px 0 0 2.800px; align-items: flex-start; }
.app-slot { width: 103.800px; height: 104px; flex: none; display: flex; justify-content: center; position: relative; }
.app-slot svg { width: 78px; height: 78px; overflow: visible; filter: drop-shadow(0 1px 1px #0006); font-family: Inter, sans-serif; }
.dot { position: absolute; left: 48px; top: 95px; width: 8px; height: 8px; border-radius: 50%; background: #a09fa5; }
.badge { position: absolute; left: 66px; top: -9px; width: 36px; height: 36px; border-radius: 50%; background: #f4403e; color: #fff; font-size: 22px; line-height: 36px; text-align: center; }
.dsep { width: 2px; height: 94px; background: #57555b; flex: none; transform: translateY(-4px); }
.mini { width: 90px; height: 90px; position: relative; flex: none; }
.thumb { width: 90px; height: 44px; margin-top: 17px; }
.minifinder { position: absolute; left: 59px; top: 53px; width: 29px; height: 29px; }
.trash { width: 70px; height: 85px; margin: -3px 0 0 24px; }
</style>
